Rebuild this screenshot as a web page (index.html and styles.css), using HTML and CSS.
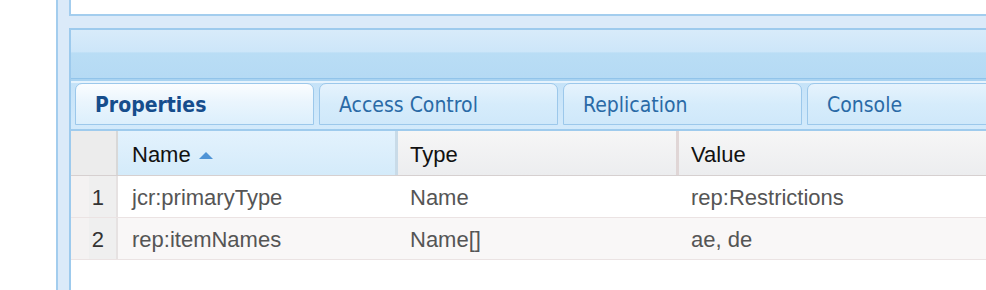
FILE: index.html
```html
<!DOCTYPE html>
<html lang="en">
<head>
  <meta charset="UTF-8">
  <title>CRXDE - Properties</title>
  <link rel="stylesheet" href="styles.css">
</head>
<body>
  <div class="frame">
    <div class="top-box"></div>

    <div class="panel">
      <div class="panel-header"></div>

      <div class="tab-strip">
        <div class="tab active">Properties</div>
        <div class="tab">Access Control</div>
        <div class="tab">Replication</div>
        <div class="tab">Console</div>
      </div>

      <div class="grid">
        <div class="grid-row grid-head">
          <div class="cell num"></div>
          <div class="cell col-name sorted">Name <span class="sort-arrow"></span></div>
          <div class="cell col-type">Type</div>
          <div class="cell col-value">Value</div>
        </div>
        <div class="grid-row">
          <div class="cell num">1</div>
          <div class="cell col-name">jcr:primaryType</div>
          <div class="cell col-type">Name</div>
          <div class="cell col-value">rep:Restrictions</div>
        </div>
        <div class="grid-row alt">
          <div class="cell num">2</div>
          <div class="cell col-name">rep:itemNames</div>
          <div class="cell col-type">Name[]</div>
          <div class="cell col-value">ae, de</div>
        </div>
      </div>
    </div>
  </div>
</body>
</html>
```

FILE: styles.css
```css
body {
  margin: 0;
  padding: 0;
  background: #fff;
  font-family: 'Liberation Sans', Arial, sans-serif;
  overflow: hidden;
}

.frame {
  margin-left: 56px;
  height: 290px;
  border-left: 2px solid #a3cdee;
  background: #dbeaf9;
  padding-left: 11px;
  overflow: hidden;
}

.top-box {
  height: 14px;
  background: #fff;
  border-left: 2px solid #a3cdee;
  border-bottom: 2px solid #a3cdee;
  margin-bottom: 12px;
}

.panel {
  border-left: 2px solid #9dcaed;
  border-top: 2px solid #9dcaed;
  background: #fff;
  height: 262px;
  overflow: hidden;
}

.panel-header {
  height: 48px;
  background: linear-gradient(to bottom, #d8ebfa 0%, #cde6f9 45%, #b9ddf5 48%, #b5daf4 100%);
}

.tab-strip {
  display: flex;
  overflow: hidden;
  border-top: 1px solid #92c4ea;
  background: linear-gradient(to bottom, #c4e2f8 0%, #d3eafb 100%);
  padding: 4px 0 4px 4px;
  border-bottom: 2px solid #9fcbed;
  height: 42px;
  box-shadow: inset 0 2px 0 #a9d3f1, inset 0 4px 0 #e6f3fd;
}

.tab {
  flex: 0 0 239px;
  margin-right: 5px;
  border: 1px solid #9cc8eb;
  border-radius: 7px 7px 0 0;
  background: linear-gradient(to bottom, #e6f3fd 0%, #d6ecfb 50%, #cfe8fa 100%);
  color: #2a6aa6;
  font-family: Tahoma, 'DejaVu Sans Condensed', 'Noto Sans', sans-serif;
  font-size: 21px;
  line-height: 42px;
  padding-left: 19px;
  box-sizing: border-box;
  height: 42px;
}

.tab.active {
  background: linear-gradient(to bottom, #fbfdff 0%, #eaf5fd 45%, #dcefFc 100%);
  color: #164d8c;
  font-weight: bold;
}

.grid {
  font-size: 22px;
  color: #555;
}

.grid-row {
  display: flex;
  height: 41px;
  align-items: center;
  border-bottom: 1px solid #ebe3e3;
  background: #fff;
}

.grid-row.alt {
  background: #f9f7f7;
}

.grid-head {
  height: 44px;
  border-bottom: 1px solid #d6d0d0;
  background: linear-gradient(to bottom, #f6f6f6 0%, #ecedef 100%);
  color: #111;
}

.cell {
  box-sizing: border-box;
  height: 100%;
  display: flex;
  align-items: center;
  padding-left: 12px;
  padding-top: 3px;
  white-space: nowrap;
}

.num {
  flex: 0 0 47px;
  justify-content: flex-end;
  padding: 3px 12px 0 0;
  background: linear-gradient(to right, #f4f2f2 0%, #f4f2f2 40%, #efefef 40%, #efefef 100%);
  border-right: 2px solid #e6e2e2;
  color: #333;
}

.grid-head .num {
  background: #ececec;
  border-right: 2px solid #d8d8d8;
}

.col-name {
  flex: 0 0 280px;
  padding-left: 14px;
}

.col-type {
  flex: 0 0 281px;
}

.grid-head .col-name {
  border-right: 3px solid #c9dbe8;
}

.grid-head .col-type {
  border-right: 3px solid #e0d6d6;
}

.col-value {
  flex: 1;
}

.grid-head .sorted {
  background: linear-gradient(to bottom, #e3f2fd 0%, #d4ebfa 100%);
}

.sort-arrow {
  display: inline-block;
  width: 0;
  height: 0;
  margin-left: 8px;
  margin-top: 2px;
  border-left: 7px solid transparent;
  border-right: 7px solid transparent;
  border-bottom: 7px solid #4f94d6;
}
```
